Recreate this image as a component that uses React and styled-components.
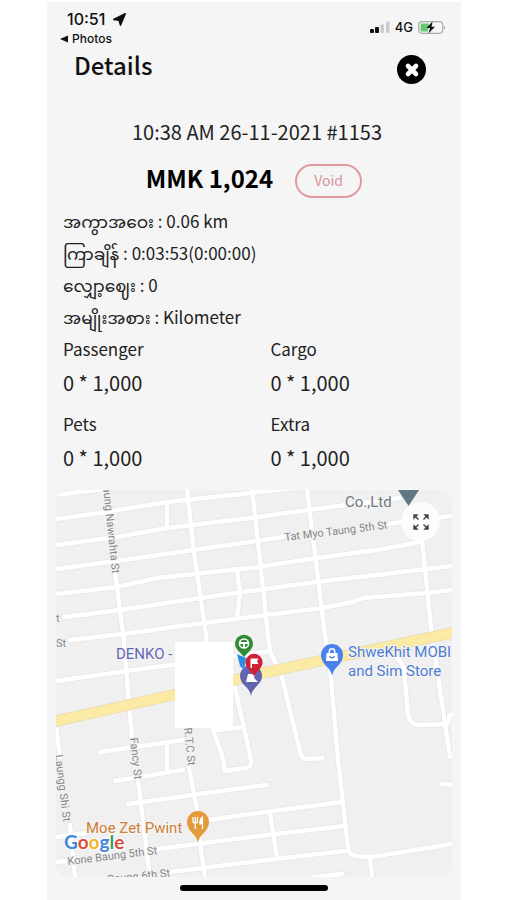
import styled, { createGlobalStyle } from "styled-components";

const details = [
  { label: "အကွာအဝေး", value: "0.06 km" },
  { label: "ကြာချိန်", value: "0:03:53(0:00:00)" },
  { label: "လျှော့ဈေး", value: "0" },
  { label: "အမျိုးအစား", value: "Kilometer" },
];

const charges = [
  { label: "Passenger", value: "0 * 1,000" },
  { label: "Cargo", value: "0 * 1,000" },
  { label: "Pets", value: "0 * 1,000" },
  { label: "Extra", value: "0 * 1,000" },
];

const roads = [
  // streets running west to east
  "M0 5L55 -2",
  "M0 29L44 23L111 12L194 3L240 -2",
  "M0 55L61 47L111 38L194 28L289 15L344 8",
  "M0 79L61 71L137 60L194 52L227 47",
  "M331 34L396 26",
  "M0 104L61 97L101 88L194 78L261 68L327 59L364 52",
  "M8 127L64 120L144 108L194 101L261 92L396 76",
  "M14 150L67 144L147 133L194 127L266 118L297 112L307 108L371 103L396 100",
  "M0 191L71 181L214 161",
  "M44 262L127 250",
  "M59 291L127 280",
  "M72 314L194 297L211 295",
  "M154 330L194 324L286 312",
  "M0 347L31 343",
  "M102 359L194 347L289 336",
  "M0 372L11 371",
  "M114 382L194 372L289 361",
  "M257 387L286 384",
  "M386 294L398 295",
  "M161 240L187 237",
  // streets running north to south
  "M59 83L67 142L76 247",
  "M82 290L94 388",
  "M131 -2L137 55L150 145L157 240L166 265L169 281L190 278Q196 277 195 270L179 197L172 163",
  "M111 14L111 38",
  "M181 80L184 101L181 128",
  "M196 -2L212 145L214 161L226 187L244 262Q246 270 252 269L267 268",
  "M251 -2L269 145L274 177L282 270L292 358Q293 366 301 366Q314 368 322 366L396 354",
  "M314 368L316 388",
  "M341 168Q347 173 348 180L352 224Q353 234 362 235L391 234Q394 232 393 225L396 224",
  "M366 50L376 146L394 267",
  "M0 237L4 267",
  "M14 335L19 388",
  "M111 254L111 282",
  "M132 272L142 325L144 352L149 388",
  "M214 323L221 367",
];

const highway = "M-4 232L117 205L207 183L400 142";

const CityMap = () => {
  return (
    <MapDrawing viewBox="0 0 396 387" role="img" aria-label="Trip map">
      <rect width="396" height="387" fill="#f1f0f0" />
      <g fill="none" strokeLinejoin="round" strokeLinecap="round">
        {roads.map((d) => (
          <path key={d} d={d} stroke="#e6e6e7" strokeWidth="6" />
        ))}
        {roads.map((d) => (
          <path key={d} d={d} stroke="#ffffff" strokeWidth="4.4" />
        ))}
        <path d={highway} stroke="#e9dcb2" strokeWidth="11.4" />
        <path d={highway} stroke="#fbeaa4" strokeWidth="9.6" />
      </g>

      <StreetName transform="translate(47 -3) rotate(84)">aung Nawrahta St</StreetName>
      <StreetName transform="translate(229 51) rotate(-7)">Tat Myo Taung 5th St</StreetName>
      <StreetName x="0" y="132">t</StreetName>
      <StreetName x="0" y="157">St</StreetName>
      <StreetName transform="translate(74 248) rotate(84)">Fancy St</StreetName>
      <StreetName transform="translate(128 238) rotate(84)">R.T.C St</StreetName>
      <StreetName transform="translate(-1 265) rotate(83)">Laungg Shi St</StreetName>
      <StreetName transform="translate(12 375) rotate(-7)">Kone Baung 5th St</StreetName>
      <StreetName transform="translate(52 393) rotate(-6)">Baung 6th St</StreetName>

      <PlaceName x="289" y="17" fill="#6e7a86">Co.,Ltd</PlaceName>
      <PlaceName x="60" y="169" fill="#6468b4">DENKO -</PlaceName>
      <PlaceName x="292" y="167" fill="#4f7bd3">ShweKhit MOBI</PlaceName>
      <PlaceName x="292" y="186" fill="#4f7bd3">and Sim Store</PlaceName>
      <PlaceName x="30" y="343" fill="#cf7e35">Moe Zet Pwint</PlaceName>

      <path d="M342 0H363L352.500 16Z" fill="#607886" />

      {/* fuel station */}
      <path d="M195 206C194 197 184 195 184 186A11 11 0 0 1 206 186C206 195 196 197 195 206Z" fill="#6266b0" />
      <path d="M190 192L192 184H199L198 188L202 192Z" fill="#fff" />
      <path d="M181 164L190 168L188 180L184 176Z" fill="#2f8ce8" />
      {/* trip start */}
      <path d="M188 167L181.500 160A9 9 0 1 1 194.500 160Z" fill="#2f8a34" />
      <circle cx="188" cy="153.500" r="4.600" fill="none" stroke="#fff" strokeWidth="1.500" />
      <path d="M184 153H192M188 154V158" stroke="#fff" strokeWidth="1.800" />
      {/* trip end */}
      <path d="M198 186L191.500 178A8.600 8.600 0 1 1 204.500 178Z" fill="#cf2335" />
      <path d="M194.500 178V168.500H202.500L201 171.500L202.500 174H196V178Z" fill="#fff" />

      {/* shop */}
      <path d="M276 186C275 177 265 175 265 165A11 11 0 0 1 287 165C287 175 277 177 276 186Z" fill="#4a80ea" />
      <path d="M270.500 163H281.500L282 171H270Z" fill="#fff" />
      <path d="M273.300 163V161.500A2.700 2.700 0 0 1 278.700 161.500V163" fill="none" stroke="#fff" strokeWidth="1.500" />
      <path d="M273.500 166A2.600 2.600 0 0 0 278.500 166" fill="none" stroke="#4a80ea" strokeWidth="1.200" />

      {/* restaurant */}
      <path d="M142 353C141 344 131 342 131 332A11 11 0 0 1 153 332C153 342 143 344 142 353Z" fill="#e39b3c" />
      <path d="M137 327V331.500Q137 333 139.300 333Q141.500 333 141.500 331.500V327M139.300 327V339" fill="none" stroke="#fff" strokeWidth="1.300" />
      <path d="M146.500 339V327Q143.800 328 143.800 334H146.500" fill="#fff" stroke="#fff" strokeWidth="1.200" />

      <rect x="119" y="152" width="58" height="86" fill="#fff" />

      <GoogleName x="8" y="359">
        <tspan fill="#4285dc">G</tspan>
        <tspan fill="#dd4b3e">o</tspan>
        <tspan fill="#eeb529">o</tspan>
        <tspan fill="#4285dc">g</tspan>
        <tspan fill="#3f9e57">l</tspan>
        <tspan fill="#dd4b3e">e</tspan>
      </GoogleName>
    </MapDrawing>
  );
};

const StatusBar = () => {
  return (
    <Status>
      <div>
        <Clock>
          10:51
          <svg width="13" height="13" viewBox="0 0 13 13">
            <path d="M12.300 0.700L7.500 12.300L6 7.200L0.700 6.500Z" fill="#111" stroke="#111" strokeWidth="1.400" strokeLinejoin="round" />
          </svg>
        </Clock>
        <BackLink href="#photos">
          <svg width="8" height="8" viewBox="0 0 8 8">
            <path d="M0 4L8 0.500V7.500Z" fill="#111" />
          </svg>
          Photos
        </BackLink>
      </div>
      <Signals>
        <svg width="20" height="13" viewBox="0 0 20 13">
          <rect x="0" y="8" width="4" height="4" rx="1" fill="#111" />
          <rect x="5" y="6" width="4" height="6" rx="1" fill="#111" />
          <rect x="10.500" y="3.500" width="3.500" height="8.500" rx="1" fill="#ccc" />
          <rect x="16" y="0.500" width="3.500" height="11.500" rx="1" fill="#ccc" />
        </svg>
        4G
        <svg width="28" height="13" viewBox="0 0 28 13">
          <rect x="0.700" y="0.700" width="24" height="11.600" rx="3.500" fill="#f5f5f5" stroke="#a9aea9" strokeWidth="1.200" />
          <path d="M4 2.500H11L10 10.500H4Q2.500 10.500 2.500 9V4Q2.500 2.500 4 2.500Z" fill="#69c877" />
          <path d="M26 4.500Q28 6.500 26 8.500Z" fill="#999" />
          <path d="M14.500 0.500L8.500 7H12L10.500 12.500L17 5.800H13.500Z" fill="#111" />
        </svg>
      </Signals>
    </Status>
  );
};

const App = () => {
  return (
    <>
      <GlobalStyle />
      <Screen>
        <StatusBar />
        <Header>
          <h1>Details</h1>
          <CloseButton type="button" aria-label="Close">
            <svg width="16" height="16" viewBox="0 0 16 16">
              <path d="M4 4L12 12M12 4L4 12" stroke="#fff" strokeWidth="4.600" strokeLinecap="round" />
            </svg>
          </CloseButton>
        </Header>
        <TripTime>10:38 AM 26-11-2021 #1153</TripTime>
        <Total>
          <strong>MMK 1,024</strong>
          <VoidButton type="button">Void</VoidButton>
        </Total>
        <DetailList>
          {details.map(({ label, value }) => (
            <li key={label}>
              {label} : {value}
            </li>
          ))}
        </DetailList>
        <Charges>
          {charges.map(({ label, value }) => (
            <div key={label}>
              <dt>{label}</dt>
              <dd>{value}</dd>
            </div>
          ))}
        </Charges>
        <MapCard>
          <CityMap />
          <ExpandButton type="button" aria-label="Expand map">
            <svg width="18" height="18" viewBox="0 0 18 18">
              <g fill="#444" stroke="#444" strokeWidth="1.400">
                <path d="M2 5V2H5ZM3 3L6.500 6.500" />
                <path d="M13 2H16V5ZM15 3L11.500 6.500" />
                <path d="M2 13V16H5ZM3 15L6.500 11.500" />
                <path d="M16 13V16H13ZM15 15L11.500 11.500" />
              </g>
            </svg>
          </ExpandButton>
        </MapCard>
        <HomeIndicator />
      </Screen>
    </>
  );
};
export default App;

const GlobalStyle = createGlobalStyle`
  * {
    box-sizing: border-box;
    margin: 0;
    padding: 0;
  }

  body {
    background: #fff;
    color: #222;
    font-family: "Noto Sans CJK JP", "Noto Sans Myanmar", "Noto Sans", sans-serif;
  }
`;

const Screen = styled.main`
  display: flex;
  flex-direction: column;
  min-height: calc(100vh - 2px);
  margin: 2px 46px 0 47px;
  padding: 8px 9px;
  background: #f5f5f5;
`;

const Status = styled.header`
  display: flex;
  justify-content: space-between;
  padding: 0 6px 0 4px;
  color: #111;
  font-family: Inter, sans-serif;
`;

const Clock = styled.p`
  display: flex;
  align-items: center;
  gap: 8px;
  padding-left: 7px;
  font-size: 16px;
  font-weight: 500;
  line-height: 19px;
`;

const BackLink = styled.a`
  display: flex;
  align-items: center;
  gap: 4px;
  color: inherit;
  font-size: 12px;
  font-weight: 500;
  line-height: 20px;
  text-decoration: none;
`;

const Signals = styled.div`
  display: flex;
  align-items: center;
  align-self: flex-start;
  gap: 5px;
  padding-top: 9px;
  font-size: 13px;
  font-weight: 500;
  line-height: 16px;
`;

const Header = styled.div`
  display: flex;
  align-items: flex-start;
  justify-content: space-between;
  padding: 0 26px 0 18px;

  h1 {
    color: #111;
    font-size: 24px;
    font-weight: 500;
    line-height: 32px;
  }
`;

const CloseButton = styled.button`
  display: grid;
  place-items: center;
  width: 29px;
  height: 29px;
  margin-top: 6px;
  border: none;
  border-radius: 50%;
  background: #000;
`;

const TripTime = styled.p`
  margin-top: 33px;
  padding-left: 6px;
  font-size: 20px;
  line-height: 30px;
  text-align: center;
`;

const Total = styled.div`
  display: flex;
  align-items: center;
  justify-content: center;
  gap: 22px;
  margin-top: 11px;

  strong {
    color: #000;
    font-size: 24px;
    font-weight: 700;
    line-height: 36px;
  }
`;

const VoidButton = styled.button`
  width: 67px;
  height: 34px;
  margin-top: 6px;
  padding-bottom: 2px;
  border: 2px solid #e29a9f;
  border-radius: 17px;
  background: transparent;
  color: #d9939a;
  font-family: inherit;
  font-size: 14px;
  line-height: 20px;
`;

const DetailList = styled.ul`
  margin-top: 7px;
  padding-left: 7px;
  list-style: none;
  font-size: 17px;
  line-height: 32px;
`;

const Charges = styled.dl`
  display: grid;
  grid-template-columns: 8fr 7fr;
  row-gap: 7px;
  padding-left: 7px;

  dt {
    font-size: 17px;
    line-height: 32px;
  }

  dd {
    font-size: 20px;
    line-height: 36px;
  }
`;

const MapCard = styled.section`
  position: relative;
  margin-top: 14px;
  border-radius: 12px;
  overflow: hidden;
`;

const MapDrawing = styled.svg`
  display: block;
  width: 100%;
  height: auto;
  font-family: Roboto, sans-serif;
`;

const StreetName = styled.text`
  fill: #858789;
  stroke: #f3f3f3;
  stroke-width: 2px;
  paint-order: stroke;
  font-size: 11px;
`;

const PlaceName = styled.text`
  stroke: #f5f5f5;
  stroke-width: 2px;
  paint-order: stroke;
  font-size: 15px;
`;

const GoogleName = styled.text`
  stroke: #fff;
  stroke-width: 2px;
  paint-order: stroke;
  font-family: Lato, sans-serif;
  font-size: 19px;
  font-weight: 700;
`;

const ExpandButton = styled.button`
  position: absolute;
  top: 12px;
  right: 12px;
  display: grid;
  place-items: center;
  width: 39px;
  height: 39px;
  border: none;
  border-radius: 50%;
  background: #fcfcfc;
`;

const HomeIndicator = styled.div`
  width: 148px;
  height: 6px;
  margin: 8px auto 0;
  border-radius: 3px;
  background: #000;
`;
